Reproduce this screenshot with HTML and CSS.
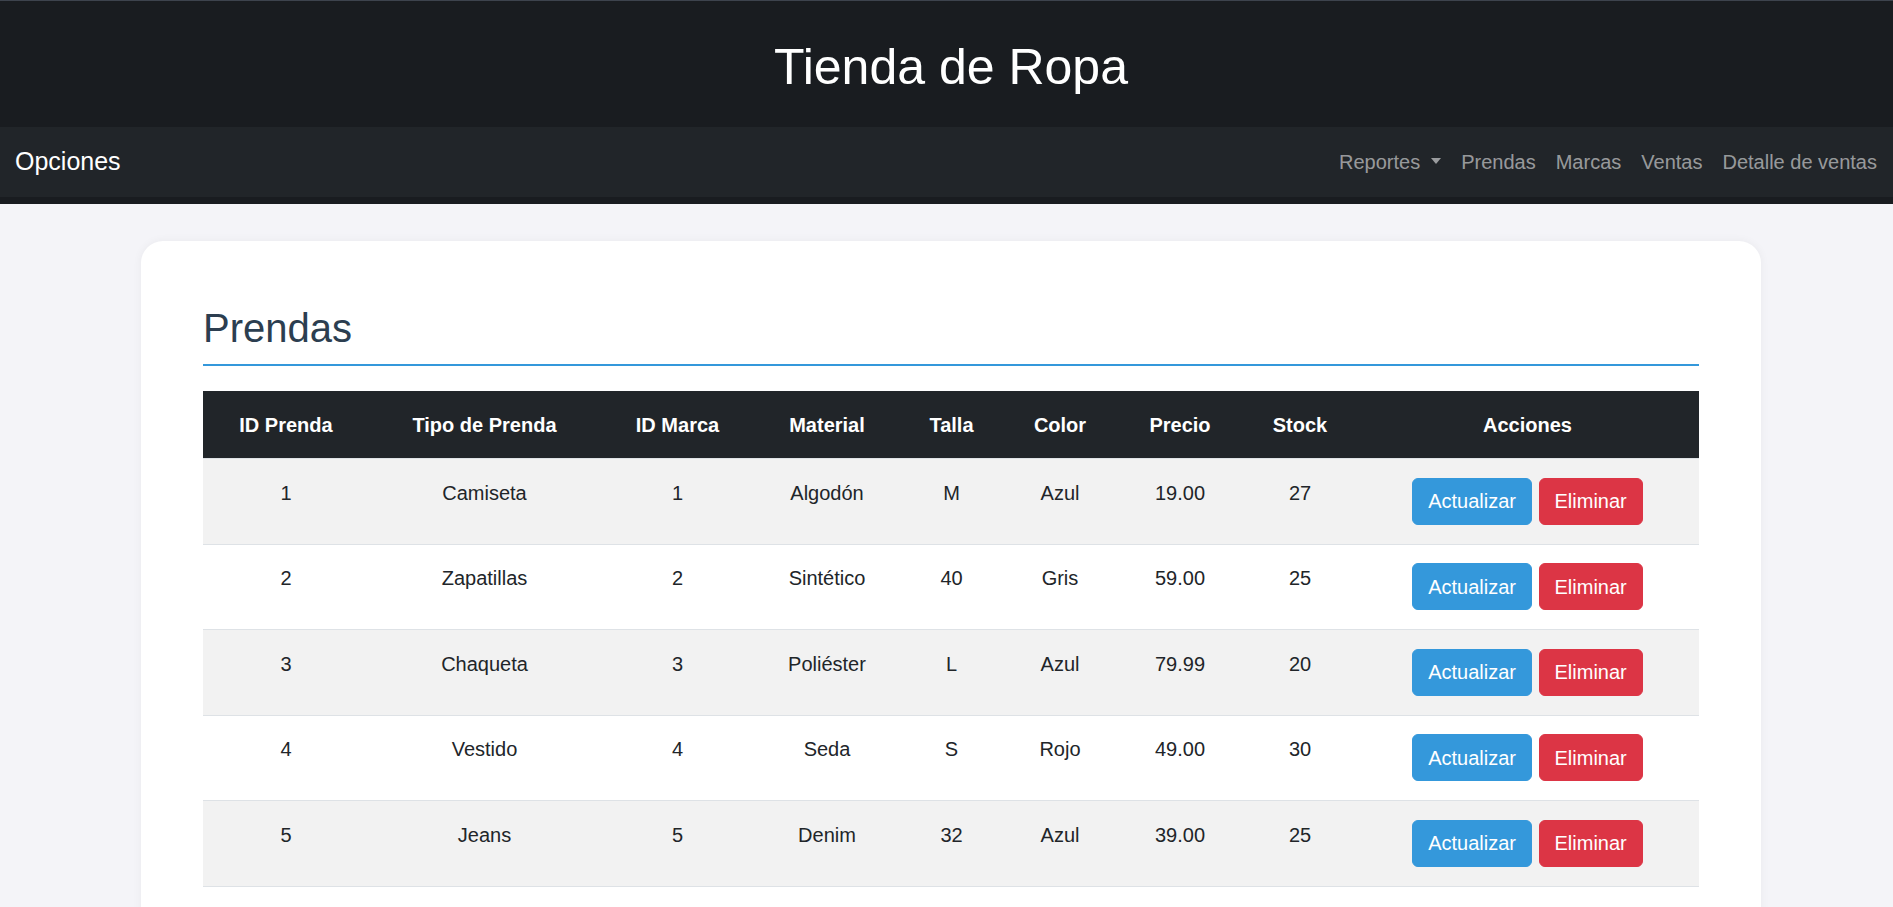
FILE: index.html
```html
<!DOCTYPE html>
<html lang="es">
<head>
<meta charset="utf-8">
<title>Tienda de Ropa</title>
<link rel="stylesheet" href="styles.css">
</head>
<body>
<div class="page">
  <header class="site-header">
    <h1 class="site-title">Tienda de Ropa</h1>
    <nav class="navbar">
      <a class="navbar-brand" href="#">Opciones</a>
      <ul class="nav-links">
        <li><a class="nav-link dropdown-toggle" href="#">Reportes</a></li>
        <li><a class="nav-link" href="#">Prendas</a></li>
        <li><a class="nav-link" href="#">Marcas</a></li>
        <li><a class="nav-link" href="#">Ventas</a></li>
        <li><a class="nav-link" href="#">Detalle de ventas</a></li>
      </ul>
    </nav>
  </header>

  <main class="content">
    <section class="card">
      <h2 class="card-title">Prendas</h2>
      <table class="data-table">
        <colgroup>
          <col class="c-id"><col class="c-tipo"><col class="c-marca"><col class="c-mat"><col class="c-talla"><col class="c-color"><col class="c-precio"><col class="c-stock"><col class="c-acc">
        </colgroup>
        <thead>
          <tr>
            <th>ID Prenda</th><th>Tipo de Prenda</th><th>ID Marca</th><th>Material</th><th>Talla</th><th>Color</th><th>Precio</th><th>Stock</th><th>Acciones</th>
          </tr>
        </thead>
        <tbody>
          <tr>
            <td>1</td><td>Camiseta</td><td>1</td><td>Algodón</td><td>M</td><td>Azul</td><td>19.00</td><td>27</td>
            <td><div class="actions"><button class="btn btn-update">Actualizar</button><button class="btn btn-delete">Eliminar</button></div></td>
          </tr>
          <tr>
            <td>2</td><td>Zapatillas</td><td>2</td><td>Sintético</td><td>40</td><td>Gris</td><td>59.00</td><td>25</td>
            <td><div class="actions"><button class="btn btn-update">Actualizar</button><button class="btn btn-delete">Eliminar</button></div></td>
          </tr>
          <tr>
            <td>3</td><td>Chaqueta</td><td>3</td><td>Poliéster</td><td>L</td><td>Azul</td><td>79.99</td><td>20</td>
            <td><div class="actions"><button class="btn btn-update">Actualizar</button><button class="btn btn-delete">Eliminar</button></div></td>
          </tr>
          <tr>
            <td>4</td><td>Vestido</td><td>4</td><td>Seda</td><td>S</td><td>Rojo</td><td>49.00</td><td>30</td>
            <td><div class="actions"><button class="btn btn-update">Actualizar</button><button class="btn btn-delete">Eliminar</button></div></td>
          </tr>
          <tr>
            <td>5</td><td>Jeans</td><td>5</td><td>Denim</td><td>32</td><td>Azul</td><td>39.00</td><td>25</td>
            <td><div class="actions"><button class="btn btn-update">Actualizar</button><button class="btn btn-delete">Eliminar</button></div></td>
          </tr>
        </tbody>
      </table>
    </section>
  </main>
</div>
</body>
</html>
```

FILE: styles.css
```css
html, body {
  margin: 0;
  padding: 0;
  overflow: hidden;
}

body {
  background: #f4f4f8;
  font-family: "Liberation Sans", Arial, sans-serif;
  color: #212529;
}

.page {
  width: 1902px;
}

/* Header */
.site-header {
  background: #191c20;
  border-top: 1px solid #3d434d;
  padding-bottom: 7px;
}

.site-title {
  margin: 0;
  padding: 36px 0 30px;
  font-size: 50px;
  line-height: 60px;
  font-weight: 400;
  color: #ffffff;
  text-align: center;
}

.navbar {
  background: #212529;
  display: flex;
  align-items: center;
  justify-content: space-between;
  padding: 10px 15px;
}

.navbar-brand {
  font-size: 25px;
  line-height: 37.5px;
  padding: 6.25px 0;
  color: #ffffff;
  text-decoration: none;
}

.nav-links {
  display: flex;
  list-style: none;
  margin: 0;
  padding: 0;
}

.nav-link {
  display: block;
  padding: 10px;
  font-size: 20px;
  line-height: 30px;
  color: rgba(255, 255, 255, 0.55);
  text-decoration: none;
}

.dropdown-toggle::after {
  content: "";
  display: inline-block;
  margin-left: 11px;
  vertical-align: 0.25em;
  border-top: 6px solid;
  border-left: 5px solid transparent;
  border-right: 5px solid transparent;
  border-bottom: 0;
}

/* Content */
.content {
  padding-top: 37px;
}

.card {
  background: #ffffff;
  border-radius: 22px;
  margin: 0 141px 40px;
  padding: 63px 62px;
  box-shadow: 0 0 10px rgba(0, 0, 0, 0.05);
}

.card-title {
  margin: 0 0 25px;
  padding-bottom: 12px;
  border-bottom: 2px solid #3498db;
  font-size: 40px;
  line-height: 48px;
  font-weight: 400;
  color: #2c3e50;
}

.data-table {
  width: 100%;
  border-collapse: collapse;
  table-layout: fixed;
  font-size: 20px;
  line-height: 30px;
}

.c-id { width: 166px; }
.c-tipo { width: 231px; }
.c-marca { width: 155px; }
.c-mat { width: 144px; }
.c-talla { width: 105px; }
.c-color { width: 112px; }
.c-precio { width: 128px; }
.c-stock { width: 112px; }
.c-acc { width: auto; }

.data-table th,
.data-table td {
  padding: 18.75px;
  text-align: center;
  vertical-align: top;
  border-bottom: 1px solid #dee2e6;
}

.data-table thead th {
  padding-top: 18.5px;
  padding-bottom: 18.5px;
  background: #212529;
  color: #ffffff;
  font-weight: 700;
}

.data-table tbody tr:nth-child(odd) td {
  background: #f2f2f2;
}

.data-table tbody td {
  color: #212529;
}

.actions {
  display: flex;
  justify-content: center;
  gap: 6.5px;
}

.btn {
  font-family: inherit;
  font-size: 20px;
  line-height: 30px;
  padding: 7.5px 15px;
  border: 1px solid transparent;
  border-radius: 6px;
  color: #ffffff;
  cursor: pointer;
}

.btn-update {
  background: #3498db;
  border-color: #3498db;
}

.btn-delete {
  background: #dc3545;
  border-color: #dc3545;
}
```
